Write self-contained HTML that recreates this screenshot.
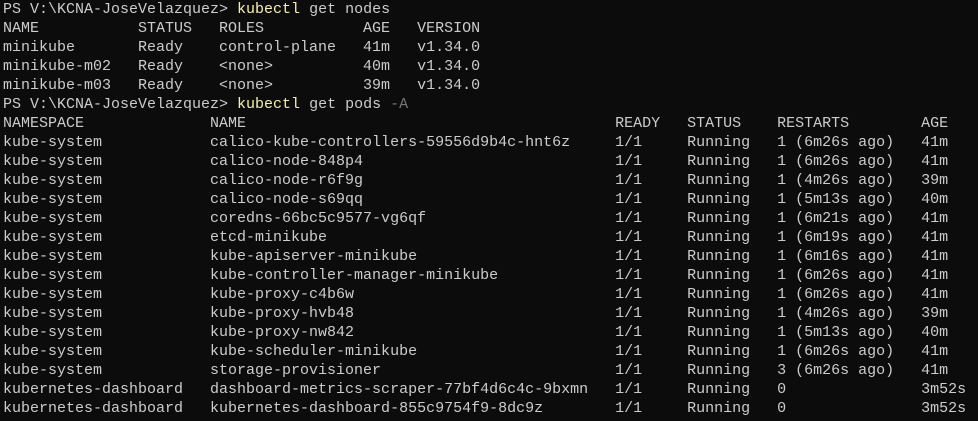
<!DOCTYPE html>
<html><head><meta charset="utf-8"><style>
html,body{margin:0;padding:0;background:#0c0c0c;width:978px;height:421px;overflow:hidden}
pre{margin:0;position:absolute;left:3px;top:0px;font-family:"Liberation Mono",monospace;font-size:15px;line-height:19px;color:#cccccc}
.y{color:#f9f1a5}.g{color:#767676}
</style></head><body><pre>PS V:\KCNA-JoseVelazquez&gt; <span class="y">kubectl</span> get nodes
NAME           STATUS   ROLES           AGE   VERSION
minikube       Ready    control-plane   41m   v1.34.0
minikube-m02   Ready    &lt;none&gt;          40m   v1.34.0
minikube-m03   Ready    &lt;none&gt;          39m   v1.34.0
PS V:\KCNA-JoseVelazquez&gt; <span class="y">kubectl</span> get pods <span class="g">-A</span>
NAMESPACE              NAME                                         READY   STATUS    RESTARTS        AGE
kube-system            calico-kube-controllers-59556d9b4c-hnt6z     1/1     Running   1 (6m26s ago)   41m
kube-system            calico-node-848p4                            1/1     Running   1 (6m26s ago)   41m
kube-system            calico-node-r6f9g                            1/1     Running   1 (4m26s ago)   39m
kube-system            calico-node-s69qq                            1/1     Running   1 (5m13s ago)   40m
kube-system            coredns-66bc5c9577-vg6qf                     1/1     Running   1 (6m21s ago)   41m
kube-system            etcd-minikube                                1/1     Running   1 (6m19s ago)   41m
kube-system            kube-apiserver-minikube                      1/1     Running   1 (6m16s ago)   41m
kube-system            kube-controller-manager-minikube             1/1     Running   1 (6m26s ago)   41m
kube-system            kube-proxy-c4b6w                             1/1     Running   1 (6m26s ago)   41m
kube-system            kube-proxy-hvb48                             1/1     Running   1 (4m26s ago)   39m
kube-system            kube-proxy-nw842                             1/1     Running   1 (5m13s ago)   40m
kube-system            kube-scheduler-minikube                      1/1     Running   1 (6m26s ago)   41m
kube-system            storage-provisioner                          1/1     Running   3 (6m26s ago)   41m
kubernetes-dashboard   dashboard-metrics-scraper-77bf4d6c4c-9bxmn   1/1     Running   0               3m52s
kubernetes-dashboard   kubernetes-dashboard-855c9754f9-8dc9z        1/1     Running   0               3m52s
</pre></body></html>
